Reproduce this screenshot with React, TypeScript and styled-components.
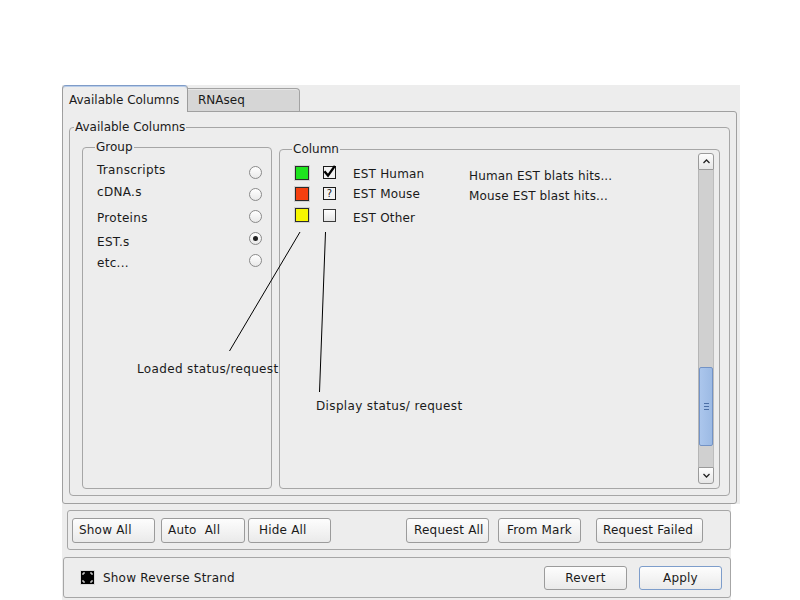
import React from "react";
import styled, { createGlobalStyle } from "styled-components";

const GlobalStyle = createGlobalStyle`
  html, body { margin: 0; padding: 0; background: #ffffff; }
  body {
    font-family: "DejaVu Sans", "Liberation Sans", sans-serif;
    font-size: 12px;
    color: #1a1a1a;
  }
  * { box-sizing: border-box; }
`;

const Window = styled.div`
  margin: 85px 0 0 62px;
  width: 678px;
  display: flex;
  flex-direction: column;
`;

const Notebook = styled.div`
  position: relative;
  width: 678px;
  background: #ededed;
`;

const TabStrip = styled.div`
  display: flex;
  align-items: flex-end;
  height: 26px;
`;

const ActiveTab = styled.div`
  position: relative;
  z-index: 1;
  width: 126px;
  height: 27px;
  margin-bottom: -1px;
  padding: 1px 0 0 6px;
  display: flex;
  align-items: center;
  background: #ededed;
  border: 1px solid #9c9c9c;
  border-top-color: #7f9cc8;
  border-bottom: none;
  border-radius: 4px 4px 0 0;
  box-shadow: inset 0 1px 0 #b9cde9;
  white-space: nowrap;
`;

const InactiveTab = styled.div`
  width: 112px;
  height: 23px;
  padding-left: 10px;
  display: flex;
  align-items: center;
  background: #d6d6d6;
  border: 1px solid #a3a3a3;
  border-left: none;
  border-bottom: none;
  border-radius: 0 4px 0 0;
  box-shadow: inset 0 1px 0 #e6e6e6;
`;

const Page = styled.div`
  width: 675px;
  height: 393px;
  border: 1px solid #a0a0a0;
  border-radius: 0 3px 3px 3px;
  padding: 11px 6px 7px 6px;
`;

const Frame = styled.fieldset<{ $width?: number; $mt?: number }>`
  margin: ${(p) => p.$mt ?? 0}px 0 0 0;
  padding: 0;
  min-width: 0;
  ${(p) => (p.$width ? `width: ${p.$width}px; flex: none;` : "")}
  border: 1px solid #a6a6a6;
  border-radius: 4px;
`;

const Legend = styled.legend<{ $ml: number }>`
  margin-left: ${(p) => p.$ml}px;
  padding: 0 1px;
  line-height: 8px;
  font-size: 12px;
  white-space: nowrap;
`;

const AvailBody = styled.div`
  height: 364px;
  padding: 12px 9px 6px 12px;
  display: flex;
  align-items: stretch;
  gap: 7px;
`;

const GroupList = styled.div`
  padding: 10px 9px 0 14px;
  display: flex;
  flex-direction: column;
`;

const GroupRow = styled.div`
  height: 22px;
  display: flex;
  align-items: center;
  justify-content: space-between;
`;

const RowLabel = styled.span<{ $dy: number; $ls?: number }>`
  margin-top: ${(p) => p.$dy * 2}px;
  letter-spacing: ${(p) => p.$ls ?? 0}px;
  white-space: nowrap;
`;

const Radio = styled.span<{ $on?: boolean }>`
  width: 13px;
  height: 13px;
  border-radius: 50%;
  border: 1px solid #8a8a8a;
  background: linear-gradient(#ffffff, #e9e9e9);
  display: flex;
  align-items: center;
  justify-content: center;
  &::after {
    content: "";
    width: 5px;
    height: 5px;
    border-radius: 50%;
    background: ${(p) => (p.$on ? "#222222" : "transparent")};
  }
`;

const ColumnBody = styled.div`
  height: 335px;
  padding: 0 5px 4px 0;
  display: flex;
`;

const ListArea = styled.div`
  flex: 1;
  padding: 10px 0 0 15px;
  display: grid;
  grid-template-columns: 28px 30px 116px auto;
  grid-template-rows: 20px 21px 22px;
  align-content: start;
  align-items: center;
  justify-items: start;
`;

const Swatch = styled.span<{ $color: string }>`
  width: 14px;
  height: 14px;
  background: ${(p) => p.$color};
  border: 1px solid #2b2b2b;
  box-shadow: 0 0 0 1px #d2d2d2;
`;

const StatusBox = styled.span<{ $dy: number; $empty?: boolean }>`
  width: 13px;
  height: 13px;
  margin-top: ${(p) => p.$dy * 2}px;
  border: 1px solid ${(p) => (p.$empty ? "#3a3a3a" : "#1a1a1a")};
  background: ${(p) => (p.$empty ? "linear-gradient(#ffffff, #e4e4e4)" : "#f3f3f3")};
  display: flex;
  align-items: center;
  justify-content: center;
  font-size: 10px;
  line-height: 11px;
  overflow: visible;
`;

const Scrollbar = styled.div`
  width: 16px;
  display: flex;
  flex-direction: column;
`;

const ScrollButton = styled.div<{ $down?: boolean }>`
  height: 17px;
  border: 1px solid #9a9a9a;
  border-radius: ${(p) => (p.$down ? "0 0 3px 3px" : "3px 3px 0 0")};
  background: linear-gradient(#fdfdfd, #e6e6e6);
  display: flex;
  align-items: center;
  justify-content: center;
`;

const Trough = styled.div`
  flex: 1;
  background: #d0d0d0;
  border-left: 1px solid #b5b5b5;
  border-right: 1px solid #bdbdbd;
  display: flex;
  flex-direction: column;
`;

const Thumb = styled.div`
  height: 79px;
  flex: none;
  background: linear-gradient(90deg, #abc6ec, #9cbae4);
  border: 1px solid #7393c6;
  border-radius: 2px;
  display: flex;
  flex-direction: column;
  align-items: center;
  justify-content: center;
  gap: 2px;
`;

const GripLine = styled.span`
  width: 5px;
  height: 1px;
  background: #4b6fa6;
`;

const Annotations = styled.svg`
  position: absolute;
  left: 0;
  top: 0;
  width: 678px;
  height: 420px;
  pointer-events: none;
  z-index: 2;
`;

const Note = styled.span<{ $x: number; $y: number }>`
  position: absolute;
  left: ${(p) => p.$x}px;
  top: ${(p) => p.$y}px;
  line-height: 14px;
  letter-spacing: 0.35px;
  white-space: nowrap;
  z-index: 2;
`;

const BottomArea = styled.div`
  width: 669px;
  background: #ededed;
  padding: 6px 0 2px 0;
  display: flex;
  flex-direction: column;
  gap: 7px;
`;

const ButtonBar = styled.div`
  margin-left: 5px;
  width: 664px;
  height: 40px;
  border: 1px solid #a6a6a6;
  border-radius: 3px;
  display: flex;
  align-items: center;
  padding: 0 27px 0 4px;
`;

const OptionsBar = styled.div`
  margin-left: 1px;
  width: 668px;
  height: 41px;
  border: 1px solid #a6a6a6;
  border-radius: 3px;
  display: flex;
  align-items: center;
  padding: 0 8px 0 16px;
`;

const Spacer = styled.div`
  flex: 1;
`;

const Button = styled.button<{ $w: number; $h?: number; $pl?: number; $ml?: number; $default?: boolean }>`
  width: ${(p) => p.$w}px;
  height: ${(p) => p.$h ?? 25}px;
  margin: 0 0 0 ${(p) => p.$ml ?? 0}px;
  padding: 0 0 0 ${(p) => p.$pl ?? 0}px;
  flex: none;
  display: flex;
  align-items: center;
  justify-content: ${(p) => (p.$pl !== undefined ? "flex-start" : "center")};
  font-family: inherit;
  font-size: 12px;
  letter-spacing: 0.2px;
  color: #1a1a1a;
  border: 1px solid ${(p) => (p.$default ? "#7d9dcb" : "#9b9b9b")};
  border-radius: 3px;
  background: linear-gradient(#fdfdfd, #eaeaea);
  white-space: nowrap;
`;

const CheckLabel = styled.span`
  margin-left: 8px;
  letter-spacing: 0.2px;
  white-space: nowrap;
`;

const groups = [
  { label: "Transcripts", dy: -2.5, on: false },
  { label: "cDNA.s", dy: -2, on: false },
  { label: "Proteins", dy: 2, on: false },
  { label: "EST.s", dy: 3.5, on: true },
  { label: "etc...", dy: 3, on: false },
];

type Status = "checked" | "unknown" | "empty";

const columns: { color: string; status: Status; boxDy: number; name: string; nameDy: number; desc: string; descDy: number }[] = [
  { color: "#1ee41e", status: "checked", boxDy: -0.8, name: "EST Human", nameDy: 0.5, desc: "Human EST blats hits...", descDy: 2.5 },
  { color: "#f5400f", status: "unknown", boxDy: -0.5, name: "EST Mouse", nameDy: 0, desc: "Mouse EST blast hits...", descDy: 2.5 },
  { color: "#f7f700", status: "empty", boxDy: 0, name: "EST Other", nameDy: 3, desc: "", descDy: 0 },
];

const SCROLL_FRACTION = 0.9;
const TROUGH_SPACE = 297 - 79;

function CheckMark() {
  return (
    <svg width="13" height="13" viewBox="0 0 13 13" style={{ overflow: "visible" }}>
      <path d="M2.2 6.2 L5 9.6 L11.2 0.8" fill="none" stroke="#000" strokeWidth="2.4" strokeLinecap="square" />
    </svg>
  );
}

function StatusIcon({ status, dy }: { status: Status; dy: number }) {
  if (status === "checked") {
    return (
      <StatusBox $dy={dy}>
        <CheckMark />
      </StatusBox>
    );
  }
  if (status === "unknown") {
    return <StatusBox $dy={dy}>?</StatusBox>;
  }
  return <StatusBox $dy={dy} $empty />;
}

function Chevron({ down }: { down?: boolean }) {
  return (
    <svg width="7" height="5" viewBox="0 0 7 5">
      <polyline
        points={down ? "0.5,1 3.5,4 6.5,1" : "0.5,4 3.5,1 6.5,4"}
        fill="none"
        stroke="#222"
        strokeWidth="1.3"
      />
    </svg>
  );
}

function ReverseCheck() {
  return (
    <svg width="15" height="15" viewBox="0 0 15 15">
      <rect x="0" y="0" width="15" height="15" fill="#d8d8d8" />
      <rect x="1" y="1" width="13" height="13" fill="#000" />
      <path
        d="M3 5 V3 H5 M10 3 H12 V5 M12 10 V12 H10 M5 12 H3 V10"
        fill="none"
        stroke="#fff"
        strokeWidth="1"
      />
    </svg>
  );
}

export default function App() {
  return (
    <>
      <GlobalStyle />
      <Window>
        <Notebook>
          <TabStrip>
            <ActiveTab>Available Columns</ActiveTab>
            <InactiveTab>RNAseq</InactiveTab>
          </TabStrip>
          <Page>
            <Frame>
              <Legend $ml={4}>Available Columns</Legend>
              <AvailBody>
                <Frame $width={190}>
                  <Legend $ml={12}>Group</Legend>
                  <GroupList>
                    {groups.map((g) => (
                      <GroupRow key={g.label}>
                        <RowLabel $dy={g.dy} $ls={0.3}>{g.label}</RowLabel>
                        <Radio $on={g.on} />
                      </GroupRow>
                    ))}
                  </GroupList>
                </Frame>
                <Frame $width={441} $mt={2}>
                  <Legend $ml={12}>Column</Legend>
                  <ColumnBody>
                    <ListArea>
                      {columns.map((c) => (
                        <React.Fragment key={c.name}>
                          <Swatch $color={c.color} />
                          <StatusIcon status={c.status} dy={c.boxDy} />
                          <RowLabel $dy={c.nameDy} $ls={0.2}>{c.name}</RowLabel>
                          <RowLabel $dy={c.descDy} $ls={0.15}>{c.desc}</RowLabel>
                        </React.Fragment>
                      ))}
                    </ListArea>
                    <Scrollbar>
                      <ScrollButton>
                        <Chevron />
                      </ScrollButton>
                      <Trough>
                        <Thumb style={{ marginTop: Math.round(SCROLL_FRACTION * TROUGH_SPACE) + 1 }}>
                          <GripLine />
                          <GripLine />
                          <GripLine />
                        </Thumb>
                      </Trough>
                      <ScrollButton $down>
                        <Chevron down />
                      </ScrollButton>
                    </Scrollbar>
                  </ColumnBody>
                </Frame>
              </AvailBody>
            </Frame>
          </Page>
          <Annotations viewBox="0 0 678 420">
            <line x1="238" y1="147" x2="167.5" y2="266" stroke="#000" strokeWidth="1" />
            <line x1="263.5" y1="147" x2="257.5" y2="307" stroke="#000" strokeWidth="1" />
          </Annotations>
          <Note $x={75} $y={277}>Loaded status/request</Note>
          <Note $x={254} $y={314}>Display status/ request</Note>
        </Notebook>
        <BottomArea>
          <ButtonBar>
            <Button $w={83} $pl={6}>Show All</Button>
            <Button $w={84} $pl={6} $ml={6}>Auto&nbsp; All</Button>
            <Button $w={83} $pl={10} $ml={3}>Hide All</Button>
            <Spacer />
            <Button $w={83} $pl={7}>Request All</Button>
            <Button $w={83} $pl={8} $ml={9}>From Mark</Button>
            <Button $w={107} $pl={6} $ml={15}>Request Failed</Button>
          </ButtonBar>
          <OptionsBar>
            <ReverseCheck />
            <CheckLabel>Show Reverse Strand</CheckLabel>
            <Spacer />
            <Button $w={83} $h={24}>Revert</Button>
            <Button $w={83} $h={24} $ml={12} $default>Apply</Button>
          </OptionsBar>
        </BottomArea>
      </Window>
    </>
  );
}
